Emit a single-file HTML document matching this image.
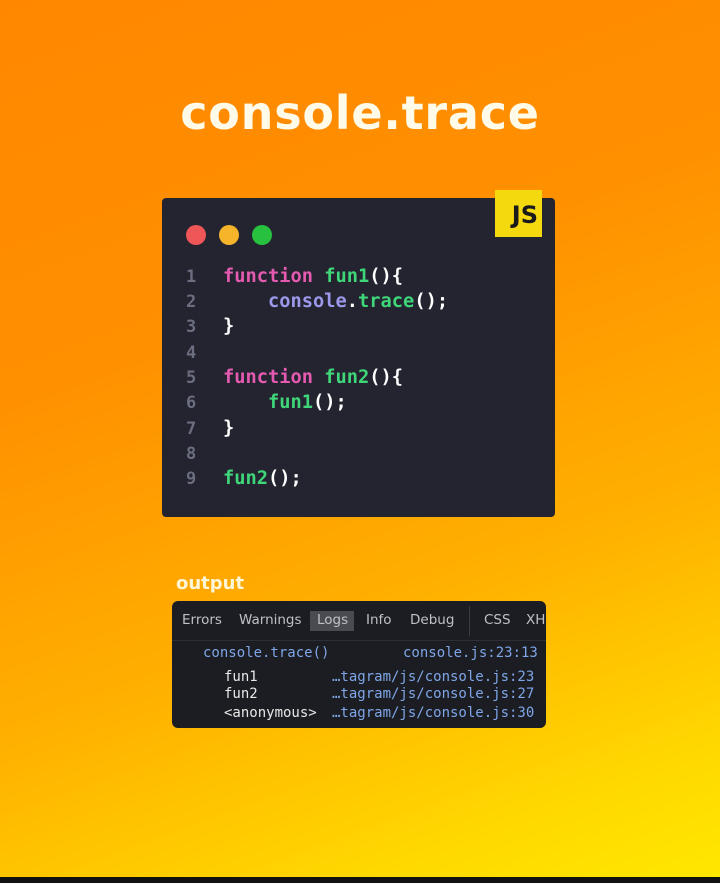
<!DOCTYPE html>
<html><head><meta charset="utf-8"><style>
*{margin:0;padding:0;box-sizing:border-box}
body{width:720px;height:883px;overflow:hidden;position:relative;font-family:"DejaVu Sans","Liberation Sans",sans-serif;
background:linear-gradient(160deg,#ff8700 0%,#ff9000 35%,#ffb000 65%,#ffd800 88%,#ffe800 100%);}
.title{position:absolute;left:0;width:720px;top:86px;text-align:center;color:#fffbe8;font-weight:bold;font-size:46px;letter-spacing:0.8px}
.code{position:absolute;left:162px;top:198px;width:393px;height:319px;background:#23242f;border-radius:4px}
.js{position:absolute;left:495px;top:190px;width:47px;height:47px;background:#f5d90f;color:#1a1a1a;font-weight:bold;font-size:24px;text-align:right;padding:13px 4px 0 0;line-height:1}
.dot{position:absolute;top:225px;width:20px;height:20px;border-radius:50%}
.ln{position:absolute;font-family:"DejaVu Sans Mono","Liberation Mono",monospace;font-weight:bold;font-size:18.7px;white-space:pre;line-height:20px}
.n{color:#6b6e80;left:186px;font-size:17px}
.c{left:223px;color:#fff}
.k{color:#e35ab0}.f{color:#3fd67a}.p{color:#9c98ea}
.out{position:absolute;left:176px;top:573px;color:#fff6d8;font-weight:bold;font-size:18px}
.con{position:absolute;left:172px;top:601px;width:374px;height:127px;background:#1c1d22;border-radius:6px}
.tab{position:absolute;top:612px;font-size:13.5px;color:#bfc0c6;font-family:"DejaVu Sans",sans-serif}
.m{position:absolute;font-family:"DejaVu Sans Mono","Liberation Mono",monospace;font-size:14px;white-space:pre;line-height:16px}
.b{color:#7ea6e8}.w{color:#e8e8e8}
</style></head><body>
<div class="title">console.trace</div>
<div class="code"></div>
<div class="js">JS</div>
<div class="dot" style="left:186px;background:#ef5658"></div>
<div class="dot" style="left:219px;background:#f6b42a"></div>
<div class="dot" style="left:252px;background:#27c13f"></div>
<div class="ln n" style="top:267px">1</div><div class="ln c" style="top:267px"><span class="k">function</span> <span class="f">fun1</span>(){</div>
<div class="ln n" style="top:292px">2</div><div class="ln c" style="top:292px">    <span class="p">console</span>.<span class="f">trace</span>();</div>
<div class="ln n" style="top:317px">3</div><div class="ln c" style="top:317px">}</div>
<div class="ln n" style="top:343px">4</div>
<div class="ln n" style="top:368px">5</div><div class="ln c" style="top:368px"><span class="k">function</span> <span class="f">fun2</span>(){</div>
<div class="ln n" style="top:393px">6</div><div class="ln c" style="top:393px">    <span class="f">fun1</span>();</div>
<div class="ln n" style="top:419px">7</div><div class="ln c" style="top:419px">}</div>
<div class="ln n" style="top:444px">8</div>
<div class="ln n" style="top:469px">9</div><div class="ln c" style="top:469px"><span class="f">fun2</span>();</div>
<div class="out">output</div>
<div class="con"></div>
<div style="position:absolute;left:310px;top:611px;width:44px;height:20px;background:#4a4b52"></div>
<div style="position:absolute;left:469px;top:606px;width:1px;height:30px;background:#3a3b42"></div>
<div style="position:absolute;left:172px;top:640px;width:374px;height:1px;background:#2e2f36"></div>
<div class="tab" style="left:182px">Errors</div>
<div class="tab" style="left:239px">Warnings</div>
<div class="tab" style="left:317px">Logs</div>
<div class="tab" style="left:366px">Info</div>
<div class="tab" style="left:410px">Debug</div>
<div class="tab" style="left:484px">CSS</div>
<div class="tab" style="left:526px">XH</div>
<div class="m b" style="left:203px;top:645px">console.trace()</div>
<div class="m b" style="left:403px;top:645px">console.js:23:13</div>
<div class="m w" style="left:224px;top:669px">fun1</div>
<div class="m w" style="left:224px;top:686px">fun2</div>
<div class="m w" style="left:224px;top:705px">&lt;anonymous&gt;</div>
<div class="m b" style="left:332px;top:669px">…tagram/js/console.js:23</div>
<div class="m b" style="left:332px;top:686px">…tagram/js/console.js:27</div>
<div class="m b" style="left:332px;top:705px">…tagram/js/console.js:30</div>
<div style="position:absolute;left:0;top:877px;width:720px;height:6px;background:#111"></div>
</body></html>
